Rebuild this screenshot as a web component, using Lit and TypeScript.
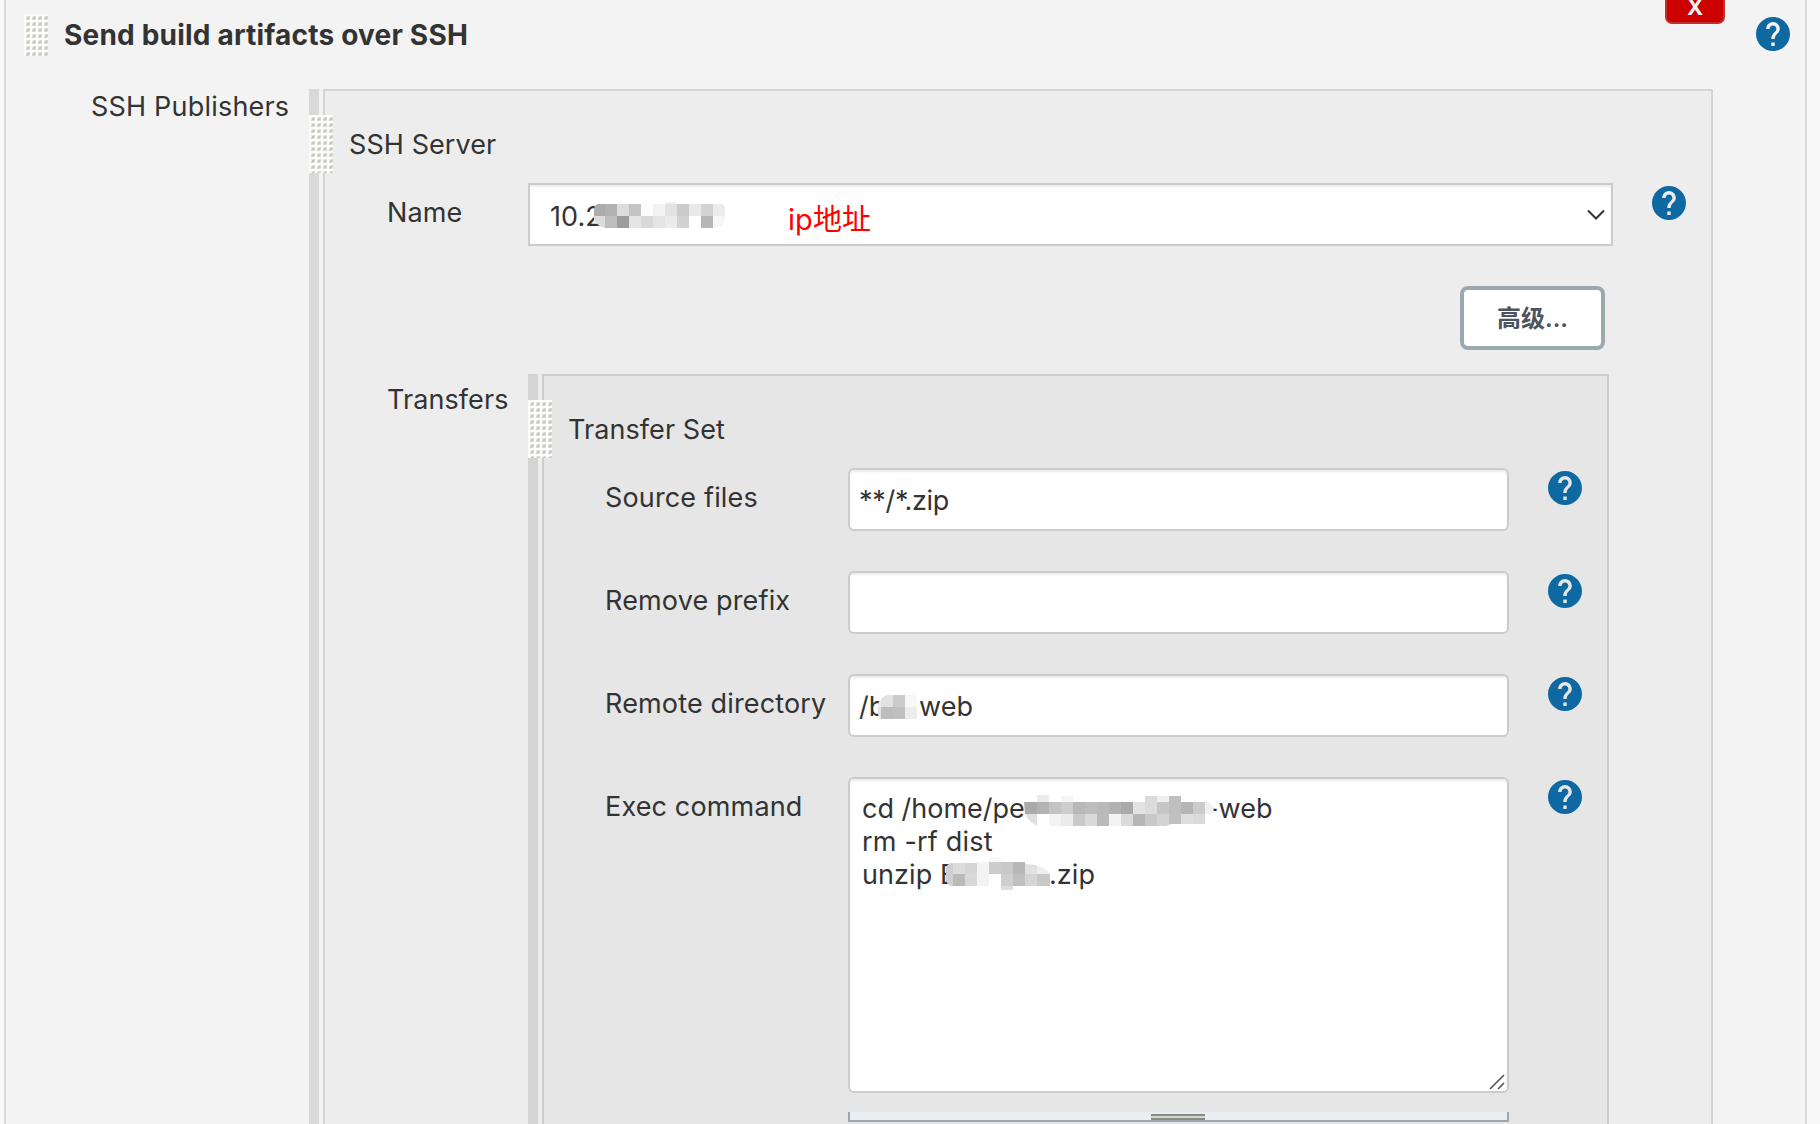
import { LitElement, html, svg, css } from "lit";
import { customElement, property } from "lit/decorators.js";

type Cell = [x: number, y: number, w: number, h: number, tone: string];

/* Expands a run of equally high cells that share their boundaries. */
const run = (edges: number[], y: number, h: number, tones: string): Cell[] =>
  tones.split(" ").map((t, i) => [edges[i], y, edges[i + 1] - edges[i], h, t] as Cell);

const steps = (first: number, start: number, count: number, last?: number): number[] => {
  const out = [first];
  for (let i = 0; i < count; i++) out.push(start + i * 12);
  if (last !== undefined) out.push(last);
  return out;
};

interface Mask {
  width: number;
  height: number;
  clip: string;
  cells: Cell[];
}

const masks: Record<string, Mask> = {
  host: {
    width: 132,
    height: 26,
    clip: "M4 2H71V0H83V2H128Q131 3 131 8V18Q130 25 119 26H12Q4 25 0 18V8Q0 3 4 2Z",
    cells: [
      [71, 0, 12, 2, "f0"],
      ...run(steps(0, 11, 11), 2, 12, "ac b2 dc c4 fd f3 e2 cb e9 d3 eb"),
      ...run(steps(0, 11, 11), 14, 12, "dc bd 9d e4 d9 e4 eb d2 fe b6 f6"),
    ],
  },
  directory: {
    width: 40,
    height: 26,
    clip: "M9 0H37Q39 0 39 3V24H3Q0 22 0 18V9Q3 2 9 0Z",
    cells: [
      ...run([0, 3, 15, 27, 39], 0, 12, "ee e2 cb f7"),
      ...run([0, 3, 15, 27, 39], 12, 12, "e4 bd c0 ec"),
    ],
  },
  path: {
    width: 191,
    height: 31,
    clip: "M0 7H13V0H25V7H37V1H49V7H121V1H157V7H184Q189 9 190 17L188 19H181V29H147L142 31H13Q5 27 1 19Z",
    cells: [
      [13, 0, 12, 7, "eb"],
      [37, 1, 12, 6, "f5"],
      [121, 1, 12, 6, "da"],
      [133, 1, 12, 6, "ef"],
      [145, 1, 12, 6, "bf"],
      ...run(steps(0, 13, 15, 190), 7, 12, "ab b3 c3 cd b8 bd b9 b2 a9 e2 dc c6 bf b5 cb f0"),
      ...run(steps(0, 13, 15), 19, 12, "e0 ff f3 eb ca da ba f3 da b5 c8 d3 c0 de da"),
    ],
  },
  archive: {
    width: 104,
    height: 33,
    clip: "M5 6H31V5H43V0H55V5H79V7Q98 7 104 17V29H67V33H55V29H5Q0 27 0 22V11Q1 7 5 6Z",
    cells: [
      [43, 0, 12, 5, "f8"],
      [31, 5, 12, 12, "f3"],
      ...run(steps(0, 7, 8, 104), 5, 12, "cf dc d5 f3 cc c9 b8 e2 ef"),
      ...run(steps(0, 7, 8, 104), 17, 12, "cf ba d8 f3 ff cf bf d5 c8"),
      [55, 29, 12, 4, "dd"],
    ],
  },
};

@customElement("pixel-mask")
export class PixelMask extends LitElement {
  @property() name = "host";
  static styles = css`
    :host {
      display: block;
    }
    svg {
      display: block;
    }
  `;
  render() {
    const m = masks[this.name];
    return html`<svg width=${m.width} height=${m.height} shape-rendering="crispEdges">
      <clipPath id="c"><path d=${m.clip}></path></clipPath>
      <g clip-path="url(#c)">
        ${m.cells.map(
          ([x, y, w, h, t]) => svg`<rect x=${x} y=${y} width=${w} height=${h} fill=${"#" + t + t + t}></rect>`
        )}
      </g>
    </svg>`;
  }
}

@customElement("help-icon")
export class HelpIcon extends LitElement {
  static styles = css`
    :host {
      display: block;
      width: 34px;
      height: 34px;
      flex: none;
    }
    svg {
      display: block;
      fill: #0e69a3;
    }
  `;
  render() {
    return html`<svg width="34" height="34" viewBox="2 2 20 20">
      <path
        d="M12 2C6.48 2 2 6.48 2 12s4.48 10 10 10 10-4.48 10-10S17.52 2 12 2zm1 17h-2v-2h2v2zm2.07-7.75l-.9.92C13.45 12.9 13 13.5 13 15h-2v-.5c0-1.1.45-2.1 1.17-2.83l1.24-1.26c.37-.36.59-.86.59-1.41 0-1.1-.9-2-2-2s-2 .9-2 2H8c0-2.21 1.79-4 4-4s4 1.79 4 4c0 .88-.36 1.68-.93 2.25z"
      ></path>
    </svg>`;
  }
}

@customElement("drag-grip")
export class DragGrip extends LitElement {
  static styles = css`
    :host {
      display: block;
      width: 24px;
      height: 58px;
      overflow: hidden;
    }
    svg {
      display: block;
    }
  `;
  render() {
    return html`<svg width="24" height="60">
      <defs>
        <pattern id="dots" width="6" height="6" patternUnits="userSpaceOnUse">
          <rect width="6" height="6" fill="#fcfcfb"></rect>
          <rect x="2" y="2" width="4" height="4" fill="#ececea"></rect>
          <path d="M2 6V4.5L4.5 2H6V4.5L4.5 6Z" fill="#d6d6d3"></path>
          <rect x="3" y="3" width="2" height="2" fill="#c6c6c2"></rect>
        </pattern>
      </defs>
      <rect width="24" height="60" fill="url(#dots)"></rect>
    </svg>`;
  }
}

@customElement("app-root")
export class AppRoot extends LitElement {
  static styles = css`
    :host {
      display: block;
      font-family: Inter, "Noto Sans CJK SC", sans-serif;
      font-size: 27px;
      line-height: 34px;
      letter-spacing: 0.08px;
      color: #333;
    }
    * {
      box-sizing: border-box;
    }
    .page {
      height: 1124px;
      padding: 0 13px 0 4px;
      background: #f9f9f9;
      overflow: hidden;
    }
    .frame {
      height: 100%;
      display: flex;
      flex-direction: column;
      background: #f3f3f3;
      border: solid #dadada;
      border-width: 0 2px;
    }
    .header {
      display: flex;
      align-items: flex-start;
      flex: none;
      height: 89px;
      padding: 0 15px 0 18px;
    }
    .header drag-grip {
      height: 42px;
      margin-top: 14px;
    }
    .title {
      margin: 18px 0 0 16px;
      font-size: 28px;
      font-weight: 700;
      letter-spacing: 0.2px;
      white-space: nowrap;
    }
    .remove {
      width: 60px;
      height: 24px;
      margin: 0 31px 0 auto;
      padding: 0;
      border: 2px solid #bf3029;
      border-top: 0;
      border-radius: 0 0 7px 7px;
      background: #c00;
      color: #f3f3f3;
      font: 700 22px/14px Inter, sans-serif;
      display: flex;
      justify-content: center;
    }
    .header help-icon {
      margin-top: 17px;
    }
    .split {
      display: flex;
      flex: 1;
      min-height: 0;
    }
    .label {
      flex: none;
      white-space: nowrap;
    }
    .publishers {
      width: 303px;
      padding: 1px 0 0 85px;
      letter-spacing: 0.2px;
    }
    .rail {
      position: relative;
      flex: none;
      width: 10px;
      margin-right: 4px;
      background: #d9d9d9;
    }
    .rail drag-grip {
      position: absolute;
      left: 0;
      top: 26px;
      z-index: 1;
    }
    .panel {
      display: flex;
      flex-direction: column;
      border: 2px solid #d4d4d4;
      border-bottom: 0;
      padding-top: 37px;
    }
    .server {
      width: 1390px;
      background: #ededed;
    }
    .transfer {
      width: 1067px;
      background: #e6e6e6;
      border-color: #cecece;
    }
    .transfers .rail {
      background: #d4d4d4;
    }
    .caption {
      margin: 0 0 21px 24px;
      white-space: nowrap;
    }
    .field {
      display: flex;
      align-items: flex-start;
      margin-bottom: 40px;
    }
    .field .label {
      padding-top: 13px;
    }
    .server-label {
      width: 203px;
      padding-left: 62px;
    }
    .transfer-label {
      width: 304px;
      padding-left: 61px;
      letter-spacing: 0.15px;
    }
    .field help-icon {
      margin: 3px 0 0 39px;
    }
    .box {
      position: relative;
      flex: none;
      display: flex;
      width: 661px;
      height: 63px;
      padding: 14px 10px 12px 9px;
      border: 2px solid #ccc;
      border-radius: 6px;
      background: #fff;
      box-shadow: inset 0 2px 2px rgba(0, 0, 0, 0.075);
      white-space: pre;
    }
    .glob {
      letter-spacing: -0.3px;
    }
    .select {
      width: 1085px;
      border-radius: 0;
      padding: 15px 10px 10px 20px;
    }
    .area {
      height: 316px;
      flex-direction: column;
      padding: 13px 11px 11px 12px;
      line-height: 33px;
    }
    .line {
      display: flex;
    }
    .spaced {
      letter-spacing: 0.2px;
    }
    .mask {
      position: absolute;
    }
    .m-host {
      left: 64px;
      top: 17px;
    }
    .m-directory {
      left: 28px;
      top: 19px;
    }
    .m-path {
      left: 174px;
      top: 16px;
    }
    .m-archive {
      left: 96px;
      top: 78px;
    }
    .w-host {
      width: 238px;
    }
    .w-directory {
      width: 60px;
    }
    .w-path {
      width: 344px;
      letter-spacing: 0;
    }
    .w-archive {
      width: 187px;
    }
    .note {
      color: #f00;
      font-size: 29px;
      margin-top: 3px;
    }
    .chevron {
      margin: 5px -4px 0 auto;
      fill: none;
      stroke: #333;
      stroke-width: 2;
    }
    .resize {
      position: absolute;
      right: 2px;
      bottom: 1px;
      stroke: #555;
      stroke-width: 1.6;
    }
    .actions {
      display: flex;
      justify-content: flex-end;
      padding-right: 106px;
      margin-bottom: 24px;
    }
    .advanced {
      width: 145px;
      height: 64px;
      padding: 2px 0 0;
      border: 4px solid #9aa8b0;
      border-radius: 8px;
      background: #fff;
      color: #4d545d;
      font: 600 24px/34px Inter, "Noto Sans CJK SC", sans-serif;
    }
    .transfers .server-label {
      padding-top: 9px;
    }
    .strip {
      display: flex;
      justify-content: center;
      width: 661px;
      height: 10px;
      margin: -21px 0 0 304px;
      padding: 2px 1px 0 0;
      border: 2px solid #9aa8b0;
      border-top: 0;
      background: #e9eef2;
    }
    .handle {
      width: 54px;
      height: 6px;
      border: solid #888c85;
      border-width: 2px 0;
      background: #d3d7cf;
    }
  `;

  private mask(name: string) {
    return html`<pixel-mask class="mask m-${name}" name=${name}></pixel-mask>`;
  }

  private field(label: string, control: unknown, kind = "transfer-label") {
    return html`<div class="field">
      <div class="label ${kind}">${label}</div>
      ${control}
      <help-icon></help-icon>
    </div>`;
  }

  render() {
    return html`<div class="page">
      <div class="frame">
        <div class="header">
          <drag-grip></drag-grip>
          <div class="title">Send build artifacts over SSH</div>
          <button class="remove">X</button>
          <help-icon></help-icon>
        </div>
        <div class="split">
          <div class="label publishers">SSH Publishers</div>
          <div class="rail"><drag-grip></drag-grip></div>
          <div class="panel server">
            <div class="caption">SSH Server</div>
            ${this.field(
              "Name",
              html`<div class="box select">
                <span class="w-host">10.2</span>${this.mask("host")}
                <span class="note">ip地址</span>
                <svg class="chevron" width="18" height="20" viewBox="0 0 18 20">
                  <path d="M1 5.5L9 13.5L17 5.5"></path>
                </svg>
              </div>`,
              "server-label"
            )}
            <div class="actions"><button class="advanced">高级...</button></div>
            <div class="split transfers">
              <div class="label server-label">Transfers</div>
              <div class="rail"><drag-grip></drag-grip></div>
              <div class="panel transfer">
                <div class="caption">Transfer Set</div>
                ${this.field("Source files", html`<div class="box glob">**/*.zip</div>`)}
                ${this.field("Remove prefix", html`<div class="box"></div>`)}
                ${this.field(
                  "Remote directory",
                  html`<div class="box"><span class="w-directory">/b</span>${this.mask("directory")}<span>web</span></div>`
                )}
                ${this.field(
                  "Exec command",
                  html`<div class="box area">
                    <div class="line"><span class="w-path">cd /home/pe</span><span>-web</span></div>
                    <div class="line spaced">rm -rf dist</div>
                    <div class="line"><span class="w-archive">unzip E</span><span>.zip</span></div>
                    ${this.mask("path")}${this.mask("archive")}
                    <svg class="resize" width="16" height="16"><path d="M1 15L15 1M9 15L15 9"></path></svg>
                  </div>`
                )}
                <div class="strip"><div class="handle"></div></div>
              </div>
            </div>
          </div>
        </div>
      </div>
    </div>`;
  }
}
